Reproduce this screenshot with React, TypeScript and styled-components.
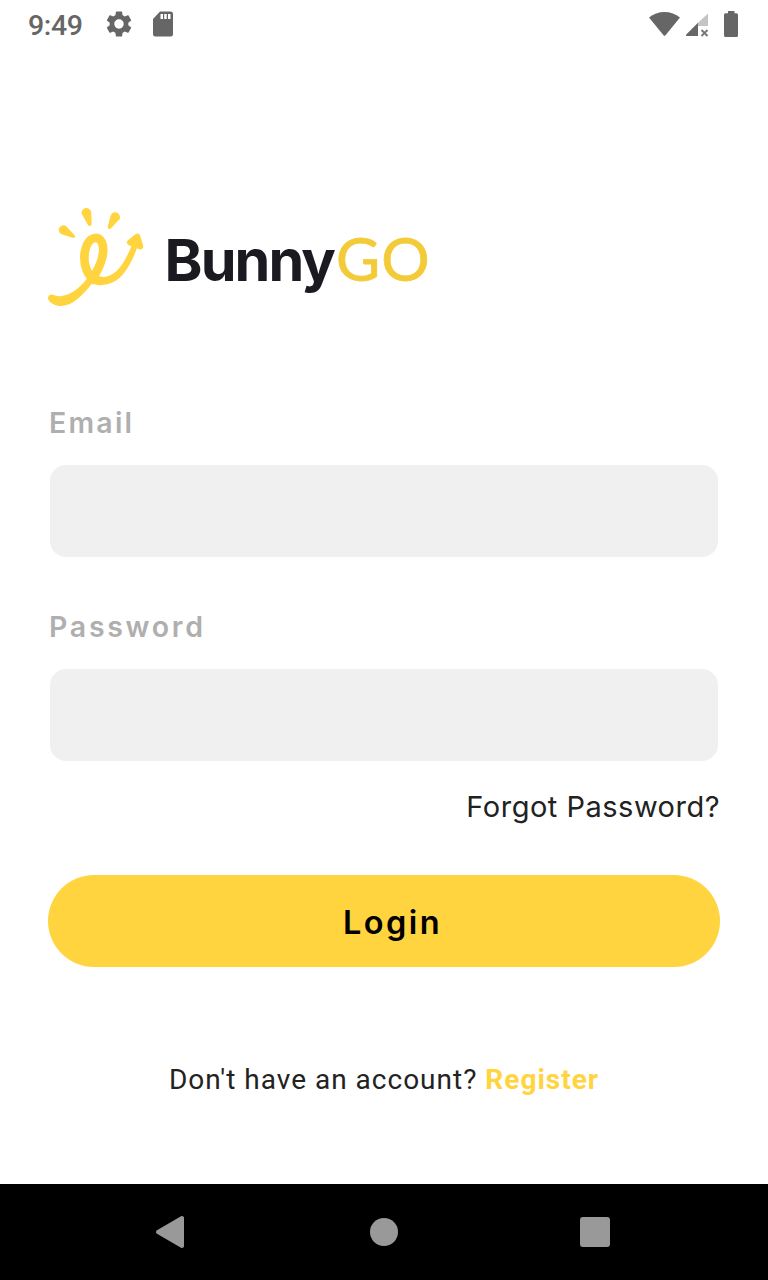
import React from "react";
import styled, { createGlobalStyle } from "styled-components";

const GlobalStyle = createGlobalStyle`
  * { box-sizing: border-box; }
  body { margin: 0; background: #fff; }
`;

const Screen = styled.div`
  display: flex;
  flex-direction: column;
  width: 768px;
  height: 1280px;
  overflow: hidden;
  background: #fff;
  font-family: Inter, sans-serif;
`;

const StatusBar = styled.header`
  display: flex;
  justify-content: space-between;
  height: 48px;
  padding: 0 28px;
`;

const StatusGroup = styled.div`
  display: flex;
  align-items: flex-start;
`;

const Clock = styled.time`
  width: 78px;
  font: 500 28.5px/52px Roboto, sans-serif;
  letter-spacing: -0.4px;
  color: #666;
`;

const Content = styled.main`
  flex: 1;
  display: flex;
  flex-direction: column;
  padding: 160px 48px 0;
`;

const Brand = styled.div`
  display: flex;
  height: 99px;
`;

const Wordmark = styled.h1`
  display: flex;
  align-items: baseline;
  margin: 0 0 0 20.5px;
  padding-top: 15px;
  font: 700 57.5px/70px Inter, sans-serif;
  letter-spacing: -1.9px;
  color: #1a1a20;
`;

const WordmarkAccent = styled.span`
  margin-left: 2px;
  font: 400 60.5px/70px Lato, sans-serif;
  letter-spacing: 1px;
  color: #f3cb39;
  -webkit-text-stroke: 0.8px #f3cb39;
`;

const Form = styled.form`
  display: flex;
  flex-direction: column;
  margin-top: 97px;
`;

const Field = styled.label`
  display: flex;
  flex-direction: column;
  height: 204px;
  padding: 0 2px;
`;

const FieldLabel = styled.span<{ $spacing: number }>`
  height: 61px;
  margin-left: -1px;
  font-size: 28.5px;
  font-weight: 600;
  line-height: 38px;
  letter-spacing: ${(p) => p.$spacing}px;
  color: #afafaf;
`;

const Input = styled.input`
  width: 668px;
  height: 92px;
  padding: 0 24px;
  border: 0;
  border-radius: 16px;
  outline: 0;
  background: #f0f0f0;
  font: 400 28px Inter, sans-serif;
`;

const ForgotLink = styled.a`
  align-self: flex-end;
  margin: -25px 0 0;
  font-size: 29px;
  line-height: 40px;
  letter-spacing: 0.5px;
  color: #222;
`;

const LoginButton = styled.button`
  height: 92px;
  margin-top: 48px;
  padding: 3px 0 0 17px;
  border: 0;
  border-radius: 46px;
  background: #ffd43f;
  font: 600 32.5px/89px Inter, sans-serif;
  letter-spacing: 2.4px;
  color: #000;
`;

const Signup = styled.p`
  margin: 93px 0 0;
  text-align: center;
  font: 400 28px/40px Roboto, sans-serif;
  letter-spacing: 1px;
  white-space: nowrap;
  color: #222;
`;

const RegisterLink = styled.a`
  font-weight: 700;
  color: #ffd43f;
`;

const NavBar = styled.nav`
  display: flex;
  justify-content: space-between;
  align-items: center;
  height: 96px;
  padding: 0 158px 0 155px;
  background: #000;
`;

const GearIcon = () => (
  <svg width="30" height="48" viewBox="0 0 30 48" fill="#666">
    <path
      transform="translate(-2.6 8.4) scale(1.3)"
      d="M19.14 12.94c.04-.3.06-.61.06-.94 0-.32-.02-.64-.07-.94l2.03-1.58c.18-.14.23-.41.12-.61l-1.92-3.32c-.12-.22-.37-.29-.59-.22l-2.39.96c-.5-.38-1.03-.7-1.62-.94l-.36-2.54c-.04-.24-.24-.41-.48-.41h-3.84c-.24 0-.43.17-.47.41l-.36 2.54c-.59.24-1.13.57-1.62.94l-2.39-.96c-.22-.08-.47 0-.59.22L2.74 8.87c-.12.21-.08.47.12.61l2.03 1.58c-.05.3-.09.63-.09.94s.02.64.07.94l-2.03 1.58c-.18.14-.23.41-.12.61l1.92 3.32c.12.22.37.29.59.22l2.39-.96c.5.38 1.03.7 1.62.94l.36 2.54c.05.24.24.41.48.41h3.84c.24 0 .44-.17.47-.41l.36-2.54c.59-.24 1.13-.56 1.62-.94l2.39.96c.22.08.47 0 .59-.22l1.92-3.32c.12-.22.07-.47-.12-.61l-2.01-1.58zM12 15.6c-1.98 0-3.6-1.62-3.6-3.6s1.62-3.6 3.6-3.6 3.6 1.62 3.6 3.6-1.62 3.6-3.6 3.6z"
    />
  </svg>
);

const SdCardIcon = () => (
  <svg width="40" height="48" viewBox="0 0 40 48">
    <path d="M24 11.5h10.5a2.5 2.5 0 0 1 2.5 2.5v20a2.5 2.5 0 0 1-2.5 2.5h-15A2.5 2.5 0 0 1 17 34V19z" fill="#666" />
    <path d="M24.5 14h2.5v5h-2.5zM28.2 14h2.5v5h-2.5zM32 14h2.5v5H32z" fill="#fff" />
  </svg>
);

const SignalIcons = () => (
  <svg width="92" height="48" viewBox="648 0 92 48">
    <path d="M649 17.5C657.5 10 671.5 10 680 17.5L665.5 35.3Q664.5 36.3 663.5 35.3Z" fill="#666" />
    <path d="M708 13.5V26H698V22.7Z" fill="#c4c4c4" />
    <path d="M698 22.7V36H687.5Q685 36 686.5 34.2Z" fill="#666" />
    <path d="M701.5 30l6 6M707.5 30l-6 6" stroke="#777" strokeWidth="1.9" />
    <path d="M728 11h6.5v2.2H736.5a1.5 1.5 0 0 1 1.5 1.5V35.5a1.5 1.5 0 0 1-1.5 1.5h-11a1.5 1.5 0 0 1-1.5-1.5V14.7a1.5 1.5 0 0 1 1.5-1.5H728z" fill="#666" />
  </svg>
);

const BrandMark = () => (
  <svg width="96" height="99" viewBox="24 24 288 297" fill="#ffd43f">
    <path d="M125 41A14 14 0 1 1 153.5 36L155 72A6 6 0 0 1 144 75Z" />
    <path d="M65 103A14 14 0 1 1 80 80L104 106A5 5 0 0 1 100 114Z" />
    <path d="M212.5 45A14 14 0 1 1 238.5 58L213 85A6 6 0 0 1 203 80Z" />
    <path
      d="M149 246C179 209 198 158 186 128C177 105 147 109 137 145C126 185 139 242 185 243"
      fill="none"
      stroke="#ffd43f"
      strokeWidth="26"
      strokeLinejoin="round"
    />
    <path d="M140 238C103 282 68 296 41 285C31 280 23 288 24 296C28 309 47 318 64 318C100 317 128 286 159 247Z" />
    <path d="M183 231C225 233 251 196 276 134L292 141C270 202 239 256 183 255Z" />
    <path d="M292 110L270 127L301 139Z" stroke="#ffd43f" strokeWidth="18" strokeLinejoin="round" />
  </svg>
);

const BackIcon = () => (
  <svg width="30" height="34" viewBox="0 0 30 34">
    <path d="M3 17L27 3V31Z" fill="#999" stroke="#999" strokeWidth="4" strokeLinejoin="round" />
  </svg>
);

const HomeIcon = styled.span`
  width: 28px;
  height: 28px;
  margin-left: 3px;
  border-radius: 50%;
  background: #999;
`;

const RecentIcon = styled.span`
  width: 30px;
  height: 30px;
  border-radius: 3px;
  background: #999;
`;

export default function App() {
  return (
    <Screen>
      <GlobalStyle />
      <StatusBar>
        <StatusGroup>
          <Clock>9:49</Clock>
          <GearIcon />
          <SdCardIcon />
        </StatusGroup>
        <StatusGroup>
          <SignalIcons />
        </StatusGroup>
      </StatusBar>
      <Content>
        <Brand>
          <BrandMark />
          <Wordmark>
            Bunny<WordmarkAccent>GO</WordmarkAccent>
          </Wordmark>
        </Brand>
        <Form>
          <Field>
            <FieldLabel $spacing={2.2}>Email</FieldLabel>
            <Input type="email" />
          </Field>
          <Field>
            <FieldLabel $spacing={2.7}>Password</FieldLabel>
            <Input type="password" />
          </Field>
          <ForgotLink>Forgot Password?</ForgotLink>
          <LoginButton type="button">Login</LoginButton>
        </Form>
        <Signup>
          Don't have an account? <RegisterLink>Register</RegisterLink>
        </Signup>
      </Content>
      <NavBar>
        <BackIcon />
        <HomeIcon />
        <RecentIcon />
      </NavBar>
    </Screen>
  );
}
